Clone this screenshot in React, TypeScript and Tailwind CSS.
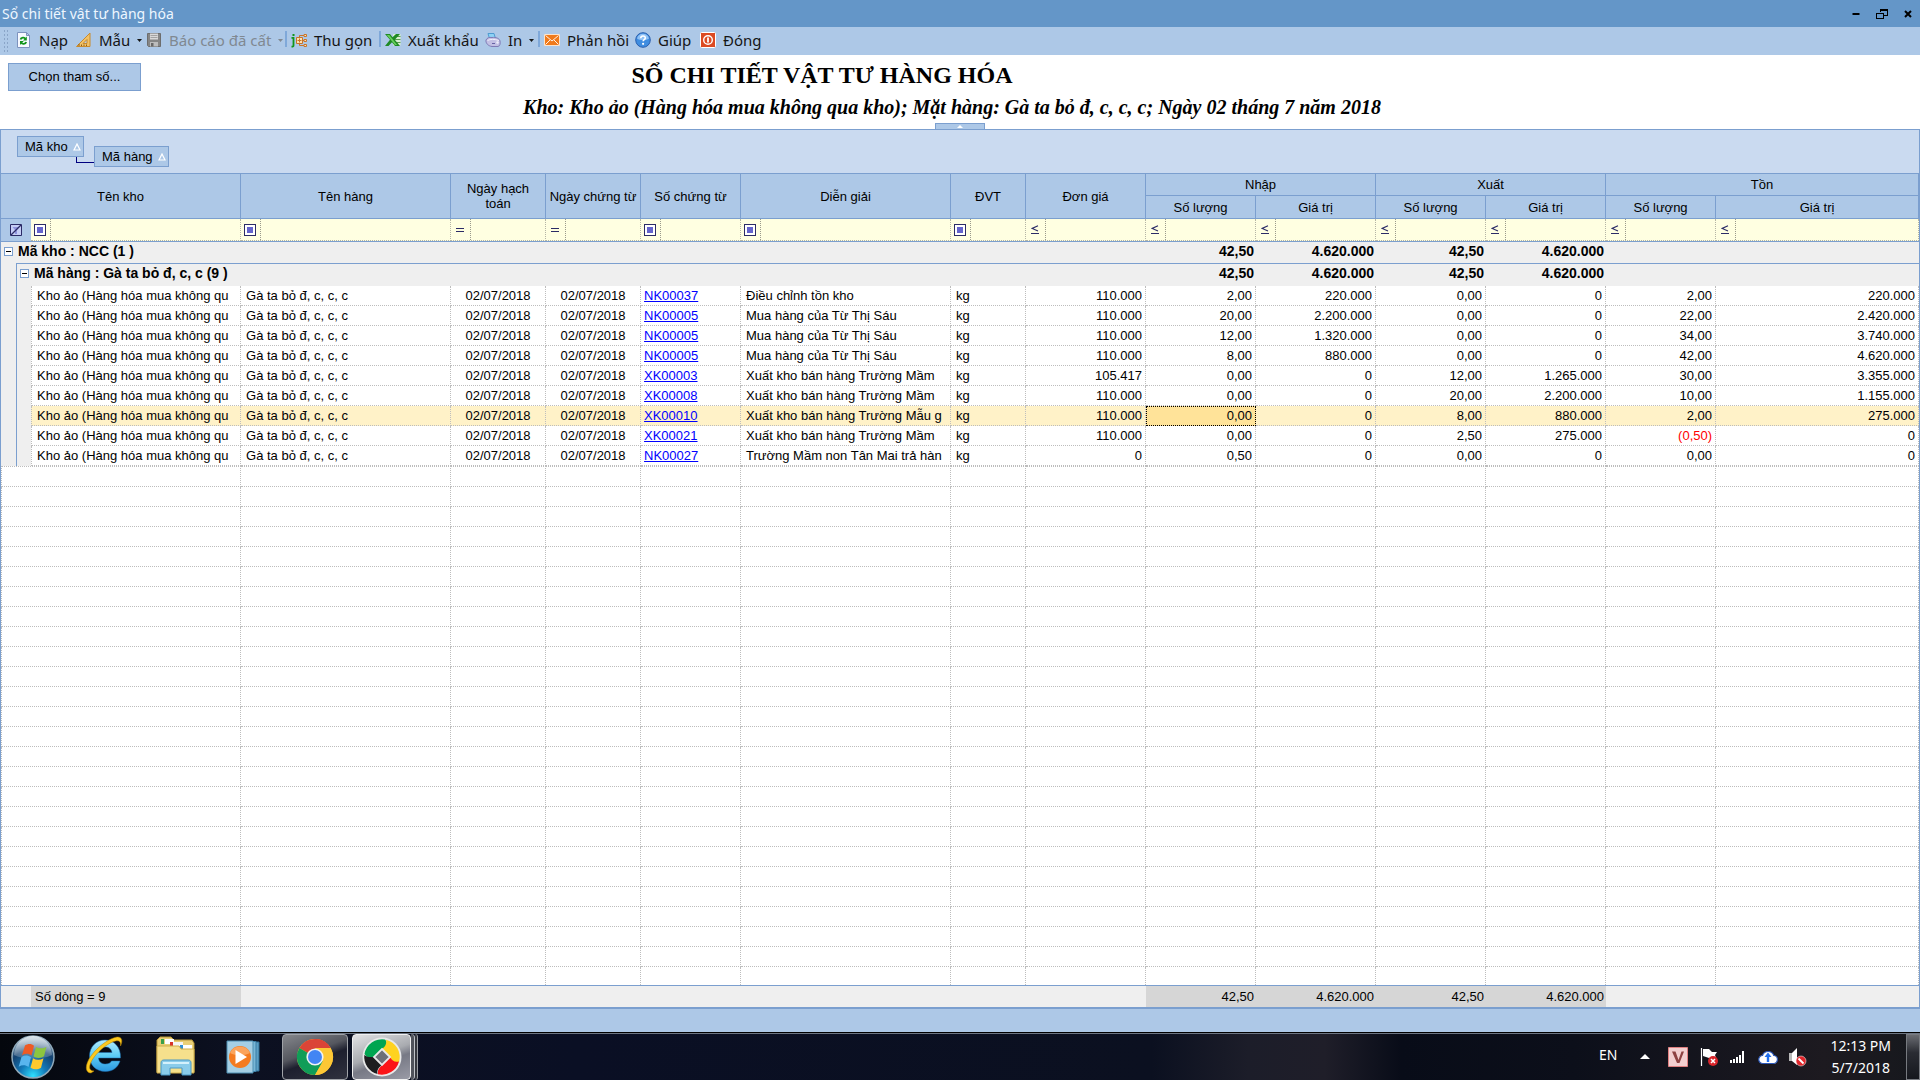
import type { ReactNode } from "react";

const LINE = "border-[#7b9fcf]";

type Row = {
  no: string;
  note: string;
  price: string;
  inQty: string;
  inVal: string;
  outQty: string;
  outVal: string;
  endQty: string;
  endVal: string;
  selected?: boolean;
};

const ROWS: Row[] = [
  { no: "NK00037", note: "Điều chỉnh tồn kho", price: "110.000", inQty: "2,00", inVal: "220.000", outQty: "0,00", outVal: "0", endQty: "2,00", endVal: "220.000" },
  { no: "NK00005", note: "Mua hàng của Từ Thị Sáu", price: "110.000", inQty: "20,00", inVal: "2.200.000", outQty: "0,00", outVal: "0", endQty: "22,00", endVal: "2.420.000" },
  { no: "NK00005", note: "Mua hàng của Từ Thị Sáu", price: "110.000", inQty: "12,00", inVal: "1.320.000", outQty: "0,00", outVal: "0", endQty: "34,00", endVal: "3.740.000" },
  { no: "NK00005", note: "Mua hàng của Từ Thị Sáu", price: "110.000", inQty: "8,00", inVal: "880.000", outQty: "0,00", outVal: "0", endQty: "42,00", endVal: "4.620.000" },
  { no: "XK00003", note: "Xuất kho bán hàng Trường Mầm", price: "105.417", inQty: "0,00", inVal: "0", outQty: "12,00", outVal: "1.265.000", endQty: "30,00", endVal: "3.355.000" },
  { no: "XK00008", note: "Xuất kho bán hàng Trường Mầm", price: "110.000", inQty: "0,00", inVal: "0", outQty: "20,00", outVal: "2.200.000", endQty: "10,00", endVal: "1.155.000" },
  { no: "XK00010", note: "Xuất kho bán hàng Trường Mẫu g", price: "110.000", inQty: "0,00", inVal: "0", outQty: "8,00", outVal: "880.000", endQty: "2,00", endVal: "275.000", selected: true },
  { no: "XK00021", note: "Xuất kho bán hàng Trường Mầm", price: "110.000", inQty: "0,00", inVal: "0", outQty: "2,50", outVal: "275.000", endQty: "(0,50)", endVal: "0" },
  { no: "NK00027", note: "Trường Mầm non Tân Mai trả hàn", price: "0", inQty: "0,50", inVal: "0", outQty: "0,00", outVal: "0", endQty: "0,00", endVal: "0" },
];

const FILTERS = [
  { label: "Tên kho", op: "box" },
  { label: "Tên hàng", op: "box" },
  { label: "Ngày hạch toán", op: "=" },
  { label: "Ngày chứng từ", op: "=" },
  { label: "Số chứng từ", op: "box" },
  { label: "Diễn giải", op: "box" },
  { label: "ĐVT", op: "box" },
  { label: "Đơn giá", op: "le" },
  { label: "Nhập số lượng", op: "le" },
  { label: "Nhập giá trị", op: "le" },
  { label: "Xuất số lượng", op: "le" },
  { label: "Xuất giá trị", op: "le" },
  { label: "Tồn số lượng", op: "le" },
  { label: "Tồn giá trị", op: "le" },
];

const EMPTY_ROWS = Array.from({ length: 26 }, (_, i) => i);

/* ---------- Toolbar icons ---------- */

const ReloadIcon = () => (
  <svg viewBox="0 0 16 16" className="size-4 shrink-0">
    <path d="M1.5 .5h9l3 3v12h-12z" fill="#f6f9ff" stroke="#7d92bd" />
    <path d="M10.5 .5v3h3z" fill="#b9cdf0" stroke="#7d92bd" />
    <path d="M4.500 7.500c.6-2.200 4-2.600 5-.6" fill="none" stroke="#12951a" strokeWidth="1.800" />
    <path d="M10.800 4.600v4H7z" fill="#12951a" />
    <path d="M10.200 10c-.6 2.200-4 2.600-5 .6" fill="none" stroke="#12951a" strokeWidth="1.800" />
    <path d="M4 12.900v-4h3.800z" fill="#12951a" />
  </svg>
);

const RulerIcon = () => (
  <svg viewBox="0 0 16 16" className="size-4 shrink-0">
    <path d="M14 1v13.500H.5z" fill="#f2c268" stroke="#c98a2c" />
    <path d="M11 7.500v4H7z" fill="#b6cdec" stroke="#c98a2c" />
    <path d="M3 14v-2M5.500 14v-1.500M8 14v-1.500M10.500 14v-1.500" stroke="#8c5a14" />
  </svg>
);

const DiskIcon = () => (
  <svg viewBox="0 0 16 16" className="size-4 shrink-0">
    <path d="M1.500 1.500h13v13h-12l-1-1z" fill="#858585" stroke="#6d6d6d" />
    <path d="M4 1.500h8v6H4z" fill="#d9d9d9" />
    <path d="M4.500 3.500h7M4.500 5.500h7" stroke="#a3a3a3" />
    <path d="M4 10h8v4.500H4z" fill="#bcbcbc" />
    <path d="M5 11h2.500v3.500H5z" fill="#686868" />
  </svg>
);

const CollapseIcon = () => (
  <svg viewBox="0 0 16 16" className="size-4 shrink-0">
    <path d="M.5 5.800h2v7.700c0 .8-.7 1.200-2 1.200" fill="none" stroke="#11961b" strokeWidth="1.800" />
    <path d="M1.500 2h2v2h-2z" fill="#11961b" />
    <path d="M5.500 5.500h6v6h-6z" fill="#ffe2b0" stroke="#c8742b" />
    <path d="M6.500 8.500h4M8.500 6.500v4" stroke="#c8742b" />
    <path d="M8.500 5V3.500H13M11.500 8.500H13M8.500 12v1.500H13" fill="none" stroke="#c8742b" />
    <path d="M13 2.500h2.500v2H13zM13 7.500h2.500v2H13zM13 12.500h2.500v2H13z" fill="#ffe2b0" stroke="#c8742b" />
  </svg>
);

const ExcelIcon = () => (
  <svg viewBox="0 0 16 16" className="size-4 shrink-0">
    <path d="M8 2h7.500v11.500H8z" fill="#d8efd2" />
    <path d="M9 4.500h6.500M9 7.500h6.500M9 10.500h6.500" stroke="#5aa04f" />
    <path d="M0 2h5l2.500 3.200L11 2h4L9.800 7.800 15 14h-5l-3-3.800L3.500 14H0l5-6.200z" fill="#1f8a24" />
    <path d="M1.800 3h2.500l7.800 10h-2z" fill="#67cf5d" />
  </svg>
);

const PrintIcon = () => (
  <svg viewBox="0 0 16 16" className="size-4 shrink-0">
    <path d="M3 1.500h6l1.500 5H4.500z" fill="#8ed2f5" stroke="#4f9bd0" />
    <path d="M1 8c1-2 3-3 6-2.500 4-.5 7.500 1 8 3.500s0 5-2 5.500H7C3 14 .5 11 1 8z" fill="#c3c0e4" stroke="#7f7bb5" />
    <path d="M2.500 8.500c3-1.500 7-1.500 11.500 0" fill="none" stroke="#efeefa" />
    <path d="M7 11.500h3" stroke="#6763a5" />
    <circle cx="12.500" cy="10.500" r="1.200" fill="#ecebfa" />
  </svg>
);

const MailIcon = () => (
  <svg viewBox="0 0 16 16" className="size-4 shrink-0">
    <path d="M.5 2.500h15v11H.5z" fill="#f07a1c" stroke="#fbe3cc" />
    <path d="M1.500 3.500 8 9l6.500-5.500M1.500 12.500 6 8M14.500 12.500 10 8" fill="none" stroke="#fff" strokeWidth=".9" />
  </svg>
);

const HelpIcon = () => (
  <svg viewBox="0 0 16 16" className="size-4 shrink-0">
    <circle cx="8" cy="8" r="7.300" fill="#3f8de0" stroke="#2a5fae" />
    <path d="M2 6.500a6.200 6.200 0 0 1 12 0C11 8.500 5 8.500 2 6.500z" fill="#8fc1f5" />
    <path d="M5.800 6.200c0-3 4.500-2.800 4.500-.3 0 1.700-2.200 1.700-2.200 3.400" fill="none" stroke="#fff" strokeWidth="1.600" />
    <circle cx="8.100" cy="11.800" r="1.100" fill="#fff" />
  </svg>
);

const PowerIcon = () => (
  <svg viewBox="0 0 16 16" className="size-4 shrink-0">
    <rect x=".5" y=".5" width="15" height="15" rx="1" fill="#dc4a22" stroke="#fff" />
    <circle cx="8" cy="8" r="4.300" fill="none" stroke="#fff" strokeWidth="1.400" />
    <path d="M8 5.500v5" stroke="#fff" strokeWidth="1.800" />
  </svg>
);

const DropArrow = () => (
  <svg viewBox="0 0 5 3" className="h-[3px] w-[5px]">
    <path d="M0 0h5L2.500 3z" fill="currentColor" />
  </svg>
);

type ToolProps = { icon: ReactNode; text: string; width: string; drop?: string; disabled?: boolean };

function Tool({ icon, text, width, drop, disabled }: ToolProps) {
  return (
    <button
      type="button"
      disabled={disabled}
      className={`flex h-7 shrink-0 items-center gap-[7px] pb-0.5 whitespace-nowrap ${width} ${disabled ? "text-[#808891]" : "text-[#151515]"}`}
    >
      {icon}
      <span>{text}</span>
      {drop && (
        <span className={`ml-auto ${drop}`}>
          <DropArrow />
        </span>
      )}
    </button>
  );
}

const ToolSeparator = () => <span className="mr-1 mb-1 h-4 w-0.5 shrink-0 bg-[#7fa8d9]" />;

function TitleBar() {
  return (
    <header className="flex h-[27px] items-center justify-between bg-[#6496c8] pr-2 pl-0.5">
      <h1 className="font-['Noto_Sans','Open_Sans',sans-serif] text-sm text-[#eef6ff]">Sổ chi tiết vật tư hàng hóa</h1>
      <div className="flex items-center gap-4">
        <button type="button" aria-label="Minimize">
          <svg viewBox="0 0 8 12" className="h-3 w-2">
            <path d="M.5 5h7v2h-7z" fill="#000" />
          </svg>
        </button>
        <button type="button" aria-label="Restore">
          <svg viewBox="0 0 12 12" className="size-3" fill="none" stroke="#000" shapeRendering="crispEdges">
            <path d="M4 1h7.500v6H8M4.500 1v3M4 2h7.500" />
            <path d="M.5 5.500h7v5h-7zM.5 5h7" />
          </svg>
        </button>
        <button type="button" aria-label="Close">
          <svg viewBox="0 0 8 8" className="size-2">
            <path d="M1 1l6 6M7 1 1 7" stroke="#000" strokeWidth="2" />
          </svg>
        </button>
      </div>
    </header>
  );
}

function Toolbar() {
  return (
    <nav className="flex h-7 items-center bg-[#adc8e7] font-['Noto_Sans','Open_Sans',sans-serif] text-[15px]">
      <span className="mr-2 ml-[3px] h-6 w-[5px] bg-[radial-gradient(#8aa5c8_1px,transparent_1px)] bg-[size:3px_4px]" />
      <Tool icon={<ReloadIcon />} text="Nạp" width="w-15" />
      <Tool icon={<RulerIcon />} text="Mẫu" width="w-[70px]" drop="mr-[5px]" />
      <Tool icon={<DiskIcon />} text="Báo cáo đã cất" width="w-[139px]" drop="mr-1" disabled />
      <ToolSeparator />
      <Tool icon={<CollapseIcon />} text="Thu gọn" width="w-[88px]" />
      <ToolSeparator />
      <Tool icon={<ExcelIcon />} text="Xuất khẩu" width="w-[100px]" />
      <Tool icon={<PrintIcon />} text="In" width="w-[53px]" drop="mr-1" />
      <ToolSeparator />
      <Tool icon={<MailIcon />} text="Phản hồi" width="w-[91px]" />
      <Tool icon={<HelpIcon />} text="Giúp" width="w-[65px]" />
      <Tool icon={<PowerIcon />} text="Đóng" width="w-[65px]" />
    </nav>
  );
}

function ReportHeading() {
  return (
    <section className="relative flex h-[74px] items-start bg-white">
      <button type="button" className={`mt-2 ml-2 h-7 w-[133px] shrink-0 border ${LINE} bg-[#adc8e7] text-[13px]`}>
        Chọn tham số...
      </button>
      <div className="flex-1 pt-1 pr-[157px] text-center font-['Liberation_Serif',serif] leading-8 font-bold whitespace-nowrap text-black">
        <h2 className="pr-[260px] text-2xl/8">SỔ CHI TIẾT VẬT TƯ HÀNG HÓA</h2>
        <p className="text-xl/8 italic">
          Kho: Kho ảo (Hàng hóa mua không qua kho); Mặt hàng: Gà ta bỏ đ, c, c, c; Ngày 02 tháng 7 năm 2018
        </p>
      </div>
      <button
        type="button"
        aria-label="Thu gọn tiêu đề"
        className={`absolute bottom-0 left-1/2 flex h-1.5 w-[50px] -translate-x-1/2 items-center justify-center border border-b-0 ${LINE} bg-[#adc8e7]`}
      >
        <svg viewBox="0 0 6 3" className="h-[3px] w-1.5">
          <path d="M0 3h6L3 0z" fill="#fff" />
        </svg>
      </button>
    </section>
  );
}

const SortMark = () => (
  <svg viewBox="0 0 8 8" className="mr-0.5 size-2 shrink-0">
    <path d="M4 1 1 7h6z" fill="none" stroke="#fff" strokeWidth="1.200" />
  </svg>
);

function GroupByArea() {
  const pill = `flex h-[21px] items-center justify-between border ${LINE} bg-[#adc8e7] pl-[7px]`;
  return (
    <div className="flex h-11 items-start bg-[#cadaf0] pt-1.5 pl-4">
      <div className="relative">
        <button type="button" className={`${pill} w-[67px]`}>
          Mã kho <SortMark />
        </button>
        <span className="absolute top-[21px] left-[59px] h-1.5 w-[18px] border-b border-l border-[#000080]" />
      </div>
      <button type="button" className={`${pill} mt-2.5 ml-2.5 w-[75px]`}>
        Mã hàng <SortMark />
      </button>
    </div>
  );
}

/* ---------- Grid ---------- */

function FilterOperator({ op }: { op: string }) {
  if (op === "box") {
    return (
      <svg viewBox="0 0 12 12" className="size-3" shapeRendering="crispEdges">
        <path d="M.5 .5h11v11H.5z" fill="#fff" stroke="#2b2b66" />
        <path d="M3 3h6v6H3z" fill="#6464cc" />
      </svg>
    );
  }
  if (op === "=") {
    return (
      <svg viewBox="0 0 8 4" className="h-1 w-2" shapeRendering="crispEdges">
        <path d="M0 .5h8M0 3.500h8" stroke="#2b2b66" />
      </svg>
    );
  }
  return (
    <svg viewBox="0 0 8 9" className="h-[9px] w-2">
      <path d="M7 .8 1.200 3.400 7 6" fill="none" stroke="#2b2b66" strokeWidth="1.100" />
      <path d="M0 8.500h8" stroke="#2b2b66" />
    </svg>
  );
}

const FilterClearIcon = () => (
  <svg viewBox="0 0 12 12" className="size-3">
    <path d="M.5 .5h11v11H.5z" fill="#c5cdf5" stroke="#2b2b66" />
    <path d="M2.500 3h7L7 6v4H5V6z" fill="#8f93dd" />
    <path d="M1 11 11 1" stroke="#2b2b66" strokeWidth="1.300" />
  </svg>
);

function Th({ children, colSpan, rowSpan }: { children: ReactNode; colSpan?: number; rowSpan?: number }) {
  return (
    <th
      colSpan={colSpan}
      rowSpan={rowSpan}
      className={`border-r border-b ${LINE} bg-[#adc8e7] px-1.5 py-0 leading-[15px] font-normal`}
    >
      {children}
    </th>
  );
}

function CollapseToggle({ label }: { label: string }) {
  return (
    <button type="button" aria-label={label} className={`flex size-[9px] items-center justify-center border ${LINE} bg-white`}>
      <span className="h-px w-[5px] bg-black" />
    </button>
  );
}

const dots = "border-dotted border-[#bdbdbd]";
const num = `border-r border-b ${dots} px-[3px] text-right`;
const text = `overflow-hidden border-r border-b ${dots} pl-[5px] whitespace-nowrap`;
const groupRow = "bg-[#efefef] text-sm leading-[19px] font-bold [&>td]:align-top";

function GroupTotals() {
  return (
    <>
      <td className="pr-0.5 text-right">42,50</td>
      <td className="pr-0.5 text-right">4.620.000</td>
      <td className="pr-0.5 text-right">42,50</td>
      <td className="pr-0.5 text-right">4.620.000</td>
      <td colSpan={2} />
    </>
  );
}

function DataRow({ row }: { row: Row }) {
  return (
    <tr className={`h-5 ${row.selected ? "bg-[#fff2c8]" : "bg-white"}`}>
      <td className="bg-[#efefef]" />
      <td className={`border-l ${LINE} bg-[#efefef]`} />
      <td className={`${text} border-l`}>Kho ảo (Hàng hóa mua không qu</td>
      <td className={text}>Gà ta bỏ đ, c, c, c</td>
      <td className={`border-r border-b ${dots} text-center`}>02/07/2018</td>
      <td className={`border-r border-b ${dots} text-center`}>02/07/2018</td>
      <td className={`border-r border-b ${dots} pl-[3px]`}>
        <a href="#chung-tu" className="text-[#0000ff] underline">
          {row.no}
        </a>
      </td>
      <td className={text}>{row.note}</td>
      <td className={text}>kg</td>
      <td className={num}>{row.price}</td>
      <td className={`${num} ${row.selected ? "bg-[#ffe399] outline -outline-offset-1 outline-dotted outline-black" : ""}`}>{row.inQty}</td>
      <td className={num}>{row.inVal}</td>
      <td className={num}>{row.outQty}</td>
      <td className={num}>{row.outVal}</td>
      <td className={`${num} ${row.endQty.startsWith("(") ? "text-[#ff0000]" : ""}`}>{row.endQty}</td>
      <td className={num}>{row.endVal}</td>
    </tr>
  );
}

function EmptyRow({ index }: { index: number }) {
  const first = index === 0;
  const last = index === EMPTY_ROWS.length - 1;
  const cell = `border-r ${dots} ${first ? "border-t" : ""} ${last ? "" : "border-b"}`;
  return (
    <tr className={first ? "h-[21px]" : last ? "h-[18px]" : "h-5"}>
      <td colSpan={3} className={`${cell} border-l`} />
      {FILTERS.slice(1).map((f) => (
        <td key={f.label} className={cell} />
      ))}
    </tr>
  );
}

function LedgerTable() {
  return (
    <table className="w-full table-fixed border-separate border-spacing-0 bg-white leading-[19px] [&_td]:py-0">
      <colgroup>
        <col className="w-[15px]" />
        <col className="w-[15px]" />
        <col className="w-[210px]" />
        <col className="w-[210px]" />
        <col className="w-[95px]" />
        <col className="w-[95px]" />
        <col className="w-[100px]" />
        <col className="w-[210px]" />
        <col className="w-[75px]" />
        <col className="w-[120px]" />
        <col className="w-[110px]" />
        <col className="w-[120px]" />
        <col className="w-[110px]" />
        <col className="w-[120px]" />
        <col className="w-[110px]" />
        <col />
      </colgroup>
      <thead>
        <tr className="h-[22px]">
          <Th colSpan={3} rowSpan={2}>Tên kho</Th>
          <Th rowSpan={2}>Tên hàng</Th>
          <Th rowSpan={2}>Ngày hạch toán</Th>
          <Th rowSpan={2}>
            <span className="-mx-1.5 whitespace-nowrap">Ngày chứng từ</span>
          </Th>
          <Th rowSpan={2}>Số chứng từ</Th>
          <Th rowSpan={2}>Diễn giải</Th>
          <Th rowSpan={2}>ĐVT</Th>
          <Th rowSpan={2}>Đơn giá</Th>
          <Th colSpan={2}>Nhập</Th>
          <Th colSpan={2}>Xuất</Th>
          <Th colSpan={2}>Tồn</Th>
        </tr>
        <tr className="h-[23px]">
          <Th>Số lượng</Th>
          <Th>Giá trị</Th>
          <Th>Số lượng</Th>
          <Th>Giá trị</Th>
          <Th>Số lượng</Th>
          <Th>Giá trị</Th>
        </tr>
        <tr className="h-[23px] bg-[#ffffe1]">
          <td colSpan={2} className={`border-b ${LINE} bg-[#adc8e7]`}>
            <button type="button" aria-label="Xóa điều kiện lọc" className="ml-[9px] block">
              <FilterClearIcon />
            </button>
          </td>
          {FILTERS.map((f) => (
            <td key={f.label} className={`border-b ${LINE} p-0`}>
              <div className="flex h-[22px] border-r border-b border-dotted border-[#b5b5a5]">
                <button
                  type="button"
                  aria-label={`Điều kiện lọc ${f.label}`}
                  className="flex w-5 shrink-0 items-center justify-center border-r border-dotted border-[#9a9a8c] pr-0.5"
                >
                  <FilterOperator op={f.op} />
                </button>
                <input type="text" aria-label={`Lọc ${f.label}`} className="w-full min-w-0 bg-transparent px-1 outline-none" />
              </div>
            </td>
          ))}
        </tr>
      </thead>
      <tbody>
        <tr className={`h-[21px] ${groupRow}`}>
          <td colSpan={10}>
            <div className="flex items-center gap-[5px] pl-[3px]">
              <CollapseToggle label="Thu gọn nhóm kho" />
              <span>Mã kho : NCC (1 )</span>
            </div>
          </td>
          <GroupTotals />
        </tr>
        <tr className={`h-[23px] ${groupRow} [&>td:not(:first-child)]:border-t [&>td:not(:first-child)]:border-[#7b9fcf]`}>
          <td />
          <td colSpan={9} className="border-l">
            <div className="flex items-center gap-[5px] pl-[3px]">
              <CollapseToggle label="Thu gọn nhóm hàng" />
              <span>Mã hàng : Gà ta bỏ đ, c, c (9 )</span>
            </div>
          </td>
          <GroupTotals />
        </tr>
        {ROWS.map((row, i) => (
          <DataRow key={i} row={row} />
        ))}
        {EMPTY_ROWS.map((i) => (
          <EmptyRow key={i} index={i} />
        ))}
      </tbody>
      <tfoot>
        <tr className="h-[22px] bg-[#efefef] [&>td]:border-t [&>td]:border-[#7b9fcf]">
          <td colSpan={2} />
          <td className="bg-[#d6d6d6] pl-1">Số dòng = 9</td>
          <td colSpan={7} />
          <td className="bg-[#d6d6d6] pr-0.5 text-right">42,50</td>
          <td className="bg-[#d6d6d6] pr-0.5 text-right">4.620.000</td>
          <td className="bg-[#d6d6d6] pr-0.5 text-right">42,50</td>
          <td className="bg-[#d6d6d6] pr-0.5 text-right">4.620.000</td>
          <td colSpan={2} />
        </tr>
      </tfoot>
    </table>
  );
}

/* ---------- Taskbar ---------- */

const StartOrb = () => (
  <svg viewBox="0 0 44 44" className="size-11">
    <defs>
      <radialGradient id="orb" cx=".5" cy=".95" r=".9">
        <stop offset="0" stopColor="#2fe0ff" />
        <stop offset=".35" stopColor="#1279b8" />
        <stop offset=".7" stopColor="#14416f" />
        <stop offset="1" stopColor="#6f93ad" />
      </radialGradient>
      <linearGradient id="orbShine" x1="0" y1="0" x2="0" y2="1">
        <stop offset="0" stopColor="#fff" stopOpacity=".75" />
        <stop offset="1" stopColor="#fff" stopOpacity=".15" />
      </linearGradient>
    </defs>
    <circle cx="22" cy="22" r="21" fill="url(#orb)" stroke="#8fa9ba" strokeWidth="1.500" />
    <path d="M3 20a19 19 0 0 1 38 0c-10 5-28 5-38 0z" fill="url(#orbShine)" />
    <path d="M14 10.500c3-2.200 6.500-2 9 .2l-2.500 9.800c-3-2.200-6-2.300-9.500-.3z" fill="#ee5a24" />
    <path d="M25 12c3.200 1.900 7 1.800 10.500-.2L33 21.300c-3.500 2.200-7 2.200-10.500 .2z" fill="#8cc63f" />
    <path d="M10.500 22c3.200-2 6.500-1.900 9.500 .3L17.500 32c-3-2.200-6.500-2.200-9.800-.2z" fill="#58b5ee" />
    <path d="M22 23.200c3.500 2 7 2 10.500 0L30 32.700c-3.500 2.200-7 2.100-10.500 .1z" fill="#fdc92e" />
  </svg>
);

const ExplorerE = () => (
  <svg viewBox="0 0 40 40" className="size-10">
    <defs>
      <linearGradient id="ieBlue" x1="0" y1="0" x2="0" y2="1">
        <stop offset="0" stopColor="#b4ecfd" />
        <stop offset=".5" stopColor="#5cccf5" />
        <stop offset="1" stopColor="#2c98e0" />
      </linearGradient>
    </defs>
    <path
      d="M21 5c9 0 16 7 15.500 18H14.500c.5 4 3 6 7 6 3 0 5-1 6-3h8.500c-2 6.500-7.500 10.500-14.500 10.500C12 36.500 5.500 30 5.500 21S12 5 21 5zm-6.500 12.500H28c-.5-3.500-3-5.500-6.500-5.500s-6 2-7 5.500z"
      fill="url(#ieBlue)"
      stroke="#1b6cb0"
      strokeWidth=".5"
    />
    <path d="M7 38C1 38 .5 30 7 21 14 11 26 3 33 2c5-.5 6 4 3.500 9 .5-4-1-6-5-5C25 7.500 15 15 9.500 23 4.500 30 4 36 10 36z" fill="#fcc91e" stroke="#b98400" strokeWidth=".5" />
  </svg>
);

const FolderIcon = () => (
  <svg viewBox="0 0 42 40" className="h-10 w-[42px]">
    <path d="M2 4l3-3h11l3 3h18l2 3v29H2z" fill="#e9cf76" stroke="#b79636" />
    <path d="M6 3h3v5H6z" fill="#39a04a" />
    <path d="M10 3h9v5h-9z" fill="#fff" />
    <path d="M15 6h3v5h-3z" fill="#d9342b" />
    <path d="M18 6h10v6H18z" fill="#f5f5f5" />
    <path d="M25 9h3v5h-3z" fill="#2d8fd4" />
    <path d="M28 9h9v5h-9z" fill="#fff" />
    <path d="M2 10h22l2 3h13v24H2z" fill="#f6e08c" stroke="#cfae4d" />
    <path d="M6 39V27c0-2 1-3 3-3h24c2 0 3 1 3 3v12h-9v-7H15v7z" fill="#8accea" stroke="#4b98c4" />
    <path d="M8 27h26" stroke="#d4f1fc" strokeWidth="2" />
  </svg>
);

const PlayerIcon = () => (
  <svg viewBox="0 0 36 36" className="size-9">
    <path d="M8 3h26v29H8z" fill="#5c9fc4" stroke="#2f6f96" />
    <path d="M5 2.500h26v30H5z" fill="#79b6d6" stroke="#3b7ea5" />
    <path d="M2 2h26v32H2z" fill="#a5cfe4" stroke="#4d8fb3" />
    <circle cx="15" cy="18" r="11" fill="#f47b20" />
    <path d="M5 14a11 11 0 0 1 20 0c-6 3-14 3-20 0z" fill="#fba45c" />
    <path d="M10.500 11v14L22 18z" fill="#fff" />
  </svg>
);

const ChromeIcon = () => (
  <svg viewBox="0 0 38 38" className="size-[38px]">
    <circle cx="19" cy="19" r="18" fill="#fbc02d" />
    <path d="M19 19 3.400 10A18 18 0 0 1 34.600 10z" fill="#db4437" />
    <path d="M19 1a18 18 0 0 1 15.600 9H19z" fill="#db4437" />
    <path d="M3.400 10A18 18 0 0 0 19 37l7.800-13.500L19 19z" fill="#109d58" />
    <path d="M26.800 23.500 19 37a18 18 0 0 0 15.600-27H19z" fill="#fdc735" />
    <circle cx="19" cy="19" r="8.600" fill="#f3f3f3" />
    <circle cx="19" cy="19" r="7" fill="#4285f4" />
  </svg>
);

const AccountingIcon = () => (
  <svg viewBox="0 0 40 40" className="size-10">
    <circle cx="20" cy="20" r="19.500" fill="#e9e9e9" />
    <path d="M2.500 17A17.800 17.800 0 0 1 23 2.500c2 2.500 3 5 .5 8L20 13l-8 7c-3 1.500-7 1-9.500-3z" fill="#00a551" />
    <path d="M24 2.700A17.800 17.800 0 0 1 37 25c-3 1-6 0-8-3l-1-2-8-8c3-2 5-5 4-9.300z" fill="#ffd21f" />
    <path d="M37 24.500A17.800 17.800 0 0 1 16 37.300c-1-4 1-6 4-9.300l8-8c2 4 5 5.500 9 4.500z" fill="#fb1418" />
    <path d="M15.500 37A17.800 17.800 0 0 1 2.300 18c3 2.500 6 2 9.700 2l8 8c-3 2-5.500 5-4.500 9z" fill="#1d1d1f" />
    <path d="M20 12l8 8-8 8-8-8z" fill="#6d6f78" stroke="#e9e9e9" strokeWidth="1.800" />
  </svg>
);

function Taskbar() {
  return (
    <footer className="flex h-12 items-stretch border-t border-black bg-[linear-gradient(90deg,#04070d_0%,#0c1020_12%,#0a0f24_30%,#0b1020_60%,#1c1d29_65%,#1f1e29_69%,#080c18_73%,#0c0f1a_82%,#1d1a20_95%,#16181d_100%)] font-['Noto_Sans','Open_Sans',sans-serif] text-white shadow-[inset_0_1px_0_#6d7582]">
      <button type="button" aria-label="Start" className="ml-[11px] flex w-11 items-center">
        <StartOrb />
      </button>
      <button type="button" aria-label="Internet Explorer" className="ml-[29px] flex w-10 items-center pb-1">
        <ExplorerE />
      </button>
      <button type="button" aria-label="Windows Explorer" className="ml-[31px] flex w-[42px] items-center pb-0.5">
        <FolderIcon />
      </button>
      <button type="button" aria-label="Media Player" className="ml-7 flex w-9 items-center">
        <PlayerIcon />
      </button>
      <button
        type="button"
        aria-label="Google Chrome"
        className="mt-px ml-[21px] flex w-[66px] items-center justify-center rounded-sm border border-[#a0a3a8] bg-[linear-gradient(160deg,#85878c_0%,#55575f_40%,#1d1f2e_55%,#30323f_100%)]"
      >
        <ChromeIcon />
      </button>
      <button
        type="button"
        aria-label="MISA"
        className="mt-px ml-1 flex w-[59px] items-center justify-center rounded-sm border border-[#f0f0f0] bg-[linear-gradient(160deg,#e2e3e5_0%,#a9abb0_45%,#777985_60%,#9a9ba6_100%)]"
      >
        <AccountingIcon />
      </button>
      <span className="mt-px w-1 rounded-r-sm border-r border-[#c0c3c8] bg-[#50535b]" />
      <span className="mt-px w-[3px] rounded-r-sm border-r border-[#9a9da3] bg-[#35383f]" />

      <div className="ml-auto flex items-center">
        <span className="mr-[23px] mb-1 text-sm">EN</span>
        <button type="button" aria-label="Show hidden icons" className="mr-[18px]">
          <svg viewBox="0 0 10 5" className="h-[5px] w-2.5">
            <path d="M0 5h10L5 0z" fill="#fff" />
          </svg>
        </button>
        <svg viewBox="0 0 20 20" className="mr-3 size-5">
          <path d="M.5 .5h19v19H.5z" fill="#f3cfd0" stroke="#e07f80" />
          <path d="M4 4.500h3.500L10.500 13l3-8.500H16L11.500 16h-2.500z" fill="#8e4242" />
        </svg>
        <svg viewBox="0 0 18 20" className="mr-3 h-5 w-[18px]">
          <path d="M1.500 1v18" stroke="#fff" strokeWidth="1.200" />
          <path d="M3 2h6l3 3h5l-2 3 1 3H9L3 9z" fill="#fff" />
          <circle cx="13" cy="14" r="5" fill="#d9252b" />
          <path d="M11 12l4 4M15 12l-4 4" stroke="#fff" strokeWidth="1.500" />
        </svg>
        <svg viewBox="0 0 16 14" className="mr-3 h-3.5 w-4" fill="#fff">
          <path d="M0 10h2v3H0zM3 9h2v4H3zM6 7h2v6H6zM9 5h2v8H9zM12 1h2v12h-2z" />
        </svg>
        <svg viewBox="0 0 20 16" className="mr-2.5 h-4 w-5">
          <path d="M5 14.500a4 4 0 0 1-.5-8 6 6 0 0 1 11.300 0A4 4 0 0 1 15 14.500z" fill="#fff" stroke="#2956b8" strokeWidth="1.200" />
          <path d="M10 3.500 6.500 8h2.300v5h2.400V8h2.300z" fill="#1f6ff0" />
        </svg>
        <svg viewBox="0 0 20 20" className="mr-[22px] size-5">
          <path d="M1 6h3v8H1z" fill="#b9b9b9" />
          <path d="M4 6l5-5v17l-5-4z" fill="#fff" />
          <circle cx="13" cy="14" r="5" fill="#e0262b" stroke="#fff" strokeWidth=".5" />
          <path d="M10.500 11.500l5 5" stroke="#fff" strokeWidth="1.800" />
        </svg>
        <div className="mr-[15px] text-center text-sm leading-[22px]">
          <p>12:13 PM</p>
          <p>5/7/2018</p>
        </div>
      </div>
      <button
        type="button"
        aria-label="Show desktop"
        className="mt-px w-[14px] border border-[#777a80] bg-[linear-gradient(180deg,#6a6c72_0%,#2a2c33_40%,#15171d_100%)]"
      />
    </footer>
  );
}

export default function App() {
  return (
    <div className="flex min-h-screen flex-col bg-[#adc8e7] font-['Liberation_Sans',Arial,sans-serif] text-[13px] text-black">
      <TitleBar />
      <Toolbar />
      <ReportHeading />
      <main className={`border border-b-2 ${LINE}`}>
        <GroupByArea />
        <div className={`border-t ${LINE} -mt-px`}>
          <LedgerTable />
        </div>
      </main>
      <div className="min-h-[23px] flex-1" />
      <Taskbar />
    </div>
  );
}
